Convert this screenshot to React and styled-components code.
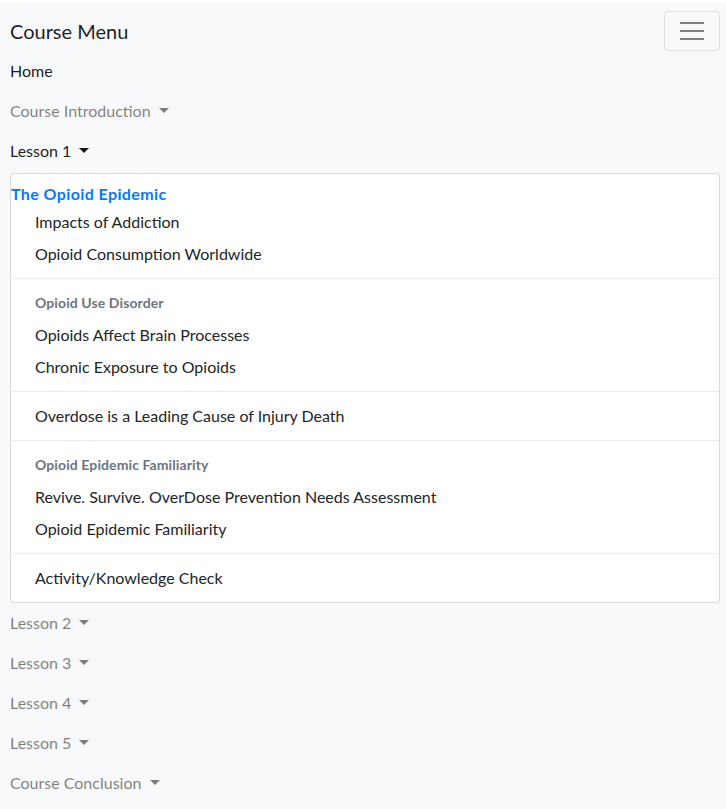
import React from "react";
import styled, { createGlobalStyle } from "styled-components";

const Global = createGlobalStyle`
  html, body { margin: 0; padding: 0; background: #fff; }
  body {
    font-family: Lato, "Open Sans", sans-serif;
    font-size: 16px;
    line-height: 1.5;
    color: #212529;
  }
  * { box-sizing: border-box; }
`;

const Navbar = styled.nav`
  margin-top: 3px;
  background: #f8f9fa;
  padding: 8px 6px 8px 10px;
  display: flex;
  flex-direction: column;
`;

const TopRow = styled.div`
  display: flex;
  align-items: center;
  justify-content: space-between;
`;

const Brand = styled.a`
  font-size: 20px;
  line-height: 30px;
  padding: 5px 0;
  color: rgba(0, 0, 0, 0.9);
  text-decoration: none;
`;

const Toggler = styled.button`
  width: 56px;
  height: 40px;
  padding: 4px 12px;
  background: transparent;
  border: 1px solid rgba(0, 0, 0, 0.1);
  border-radius: 4px;
  display: flex;
  align-items: center;
  justify-content: center;
`;

const NavList = styled.ul`
  list-style: none;
  margin: 0;
  padding: 0;
  display: flex;
  flex-direction: column;
`;

const NavLink = styled.a`
  display: block;
  padding: 8px 0;
  line-height: 24px;
  color: ${(p) => (p.$active ? "rgba(0,0,0,0.9)" : "rgba(0,0,0,0.5)")};
  text-decoration: none;
`;

const Caret = styled.span`
  display: inline-block;
  margin-left: 4px;
  vertical-align: 4px;
  border-top: 5px solid;
  border-right: 5.5px solid transparent;
  border-left: 5.5px solid transparent;
`;

const Menu = styled.div`
  margin-top: 2px;
  background: #fff;
  border: 1px solid rgba(0, 0, 0, 0.15);
  border-radius: 4px;
  padding: 8px 0;
`;

const SectionTitle = styled.div`
  color: #007bff;
  font-weight: 700;
  letter-spacing: 0.4px;
  line-height: 24px;
`;

const Item = styled.a`
  display: block;
  padding: 4px 24px;
  line-height: 24px;
  color: #212529;
  text-decoration: none;
  white-space: nowrap;
`;

const Header = styled.div`
  padding: 4px 24px;
  line-height: 24px;
  font-size: 14px;
  font-weight: 700;
  letter-spacing: 0.1px;
  color: #6c757d;
`;

const Divider = styled.div`
  height: 0;
  margin: 8px 0;
  border-top: 1px solid #e9ecef;
`;

const HamburgerIcon = () => (
  <svg width="30" height="30" viewBox="0 0 30 30">
    <path
      stroke="rgba(0,0,0,0.5)"
      strokeLinecap="butt"
      strokeMiterlimit="10"
      strokeWidth="2"
      d="M3 7h24M3 15h24M3 23h24"
    />
  </svg>
);

const Dropdown = ({ label, active }) => (
  <li>
    <NavLink href="#" $active={active}>
      {label} <Caret />
    </NavLink>
  </li>
);

export default function App() {
  return (
    <>
      <Global />
      <Navbar>
        <TopRow>
          <Brand href="#">Course Menu</Brand>
          <Toggler aria-label="Toggle navigation">
            <HamburgerIcon />
          </Toggler>
        </TopRow>
        <NavList>
          <li>
            <NavLink href="#" $active>
              Home
            </NavLink>
          </li>
          <Dropdown label="Course Introduction" />
          <li>
            <NavLink href="#" $active>
              Lesson 1 <Caret />
            </NavLink>
            <Menu>
              <SectionTitle>The Opioid Epidemic</SectionTitle>
              <Item href="#">Impacts of Addiction</Item>
              <Item href="#">Opioid Consumption Worldwide</Item>
              <Divider />
              <Header>Opioid Use Disorder</Header>
              <Item href="#">Opioids Affect Brain Processes</Item>
              <Item href="#">Chronic Exposure to Opioids</Item>
              <Divider />
              <Item href="#">Overdose is a Leading Cause of Injury Death</Item>
              <Divider />
              <Header>Opioid Epidemic Familiarity</Header>
              <Item href="#">Revive. Survive. OverDose Prevention Needs Assessment</Item>
              <Item href="#">Opioid Epidemic Familiarity</Item>
              <Divider />
              <Item href="#">Activity/Knowledge Check</Item>
            </Menu>
          </li>
          <Dropdown label="Lesson 2" />
          <Dropdown label="Lesson 3" />
          <Dropdown label="Lesson 4" />
          <Dropdown label="Lesson 5" />
          <Dropdown label="Course Conclusion" />
        </NavList>
      </Navbar>
    </>
  );
}
